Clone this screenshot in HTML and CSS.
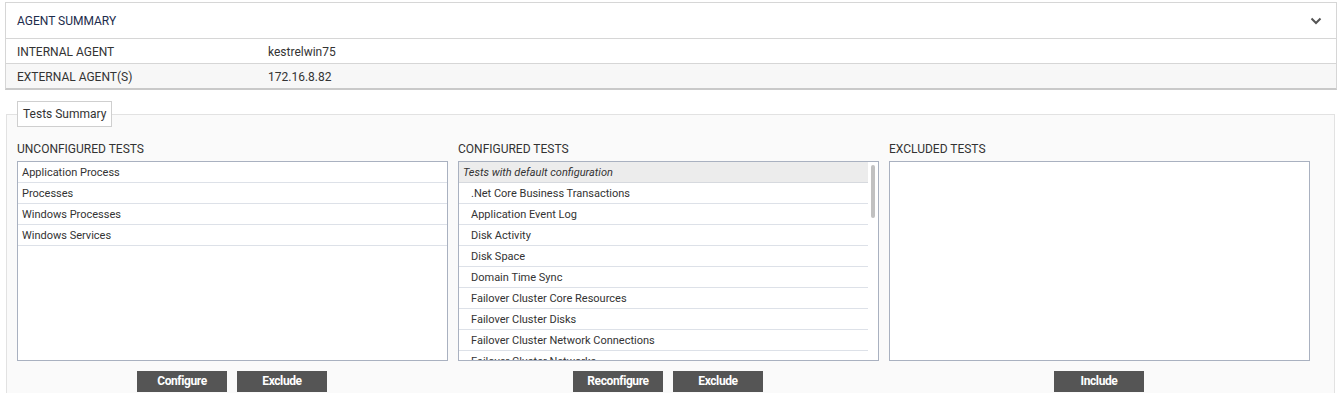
FILE: index.html
```html
<!DOCTYPE html>
<html>
	<head>
		<link rel="stylesheet" href="styles.css">
	</head>
	<body>
		<section class="agent">
			<header class="agent-head">
				<span>AGENT SUMMARY</span>
				<svg class="chevron" width="12" height="8" viewBox="0 0 12 8"><path d="M1.5 1.5 L6 6 L10.5 1.5" fill="none" stroke="#555" stroke-width="2"/></svg>
			</header>
			<div class="agent-row">
				<span class="agent-key">INTERNAL AGENT</span>
				<span>kestrelwin75</span>
			</div>
			<div class="agent-row alt">
				<span class="agent-key">EXTERNAL AGENT(S)</span>
				<span>172.16.8.82</span>
			</div>
		</section>

		<fieldset class="tests">
			<legend>Tests Summary</legend>
			<div class="columns">
				<div class="column">
					<div class="column-title">UNCONFIGURED TESTS</div>
					<div class="list">
						<div class="list-body">
							<div class="item">Application Process</div>
							<div class="item">Processes</div>
							<div class="item">Windows Processes</div>
							<div class="item">Windows Services</div>
						</div>
					</div>
					<div class="actions">
						<button class="btn">Configure</button>
						<button class="btn">Exclude</button>
					</div>
				</div>

				<div class="column">
					<div class="column-title">CONFIGURED TESTS</div>
					<div class="list">
						<div class="list-body">
							<div class="item group">Tests with default configuration</div>
							<div class="item sub">.Net Core Business Transactions</div>
							<div class="item sub">Application Event Log</div>
							<div class="item sub">Disk Activity</div>
							<div class="item sub">Disk Space</div>
							<div class="item sub">Domain Time Sync</div>
							<div class="item sub">Failover Cluster Core Resources</div>
							<div class="item sub">Failover Cluster Disks</div>
							<div class="item sub">Failover Cluster Network Connections</div>
							<div class="item sub">Failover Cluster Networks</div>
							<div class="item sub">Failover Cluster Nodes</div>
							<div class="item sub">Failover Cluster Resources</div>
							<div class="item sub">Failover Cluster Services</div>
							<div class="item sub">Handles Usage</div>
							<div class="item sub">Memory Usage</div>
							<div class="item sub">Network</div>
							<div class="item sub">Network Interfaces</div>
							<div class="item sub">Network Traffic</div>
							<div class="item sub">OS Details</div>
							<div class="item sub">Page Files</div>
							<div class="item sub">Processes Summary</div>
							<div class="item sub">Security Log</div>
							<div class="item sub">System Details</div>
							<div class="item sub">System Event Log</div>
							<div class="item sub">TCP</div>
							<div class="item sub">TCP Traffic</div>
							<div class="item sub">Uptime</div>
							<div class="item sub">Windows Update Status</div>
							<div class="item sub">WMI Status</div>
						</div>
						<div class="scrollbar"><div class="thumb"></div></div>
					</div>
					<div class="actions">
						<button class="btn">Reconfigure</button>
						<button class="btn">Exclude</button>
					</div>
				</div>

				<div class="column">
					<div class="column-title">EXCLUDED TESTS</div>
					<div class="list">
						<div class="list-body"></div>
					</div>
					<div class="actions">
						<button class="btn">Include</button>
					</div>
				</div>
			</div>
		</fieldset>
	</body>
</html>
```

FILE: styles.css
```css
body {
	margin: 0;
	font-family: Roboto, "Liberation Sans", Arial, sans-serif;
	font-size: 12px;
	color: #333;
	background-color: #fff;
	overflow: hidden;
}

.agent {
	margin: 2px 1px 0 5px;
	border: 1px solid #d6d6d6;
	border-bottom: 2px solid #c9c9c9;
}
.agent-head {
	display: flex;
	align-items: center;
	justify-content: space-between;
	height: 35px;
	padding: 0 14px 0 11px;
	color: #1d2c4c;
	border-bottom: 1px solid #d6d6d6;
}
.chevron {
	display: block;
	margin-top: 1px;
}
.agent-row {
	display: flex;
	align-items: center;
	height: 23px;
	padding: 1px 0 0 11px;
}
.agent-row + .agent-row {
	border-top: 1px solid #d6d6d6;
}
.agent-row.alt {
	background-color: #f7f7f7;
}
.agent-key {
	width: 251px;
}

.tests {
	margin: 11px 3px 0 6px;
	padding: 13px 10px 20px 10px;
	border: 1px solid #e2e2e2;
	background-color: #fafafa;
	min-width: 0;
}
.tests legend {
	padding: 0 5px;
	height: 24px;
	line-height: 24px;
	border: 1px solid #cfcfcf;
	background-color: #fff;
	color: #333;
}

.columns {
	display: grid;
	grid-template-columns: 431px 421px 421px;
	column-gap: 10px;
}
.column-title {
	line-height: 16px;
	padding-top: 1px;
	margin-bottom: 4px;
}
.list {
	display: flex;
	height: 198px;
	border: 1px solid #a9b1c0;
	background-color: #fff;
	overflow: hidden;
}
.list-body {
	flex: 1;
	overflow: hidden;
}
.item {
	height: 20px;
	line-height: 22px;
	padding-left: 4px;
	font-size: 11px;
	border-bottom: 1px solid #dde1e8;
	white-space: nowrap;
}
.item.group {
	font-style: italic;
	background-color: #ececec;
	border-bottom-color: #d6d9de;
}
.item.sub {
	padding-left: 12px;
}

.scrollbar {
	width: 10px;
	padding: 3px;
	box-sizing: border-box;
}
.thumb {
	height: 53px;
	border-radius: 2px;
	background-color: #c1c1c1;
}

.actions {
	display: flex;
	justify-content: center;
	gap: 10px;
	margin-top: 10px;
	padding-right: 1px;
}
.btn {
	width: 90px;
	height: 21px;
	padding: 0 0 2px 0;
	border: none;
	background-color: #555;
	color: #fff;
	font-family: Roboto, "Liberation Sans", Arial, sans-serif;
	font-size: 12px;
	font-weight: bold;
	letter-spacing: -0.4px;
	cursor: pointer;
}
```
